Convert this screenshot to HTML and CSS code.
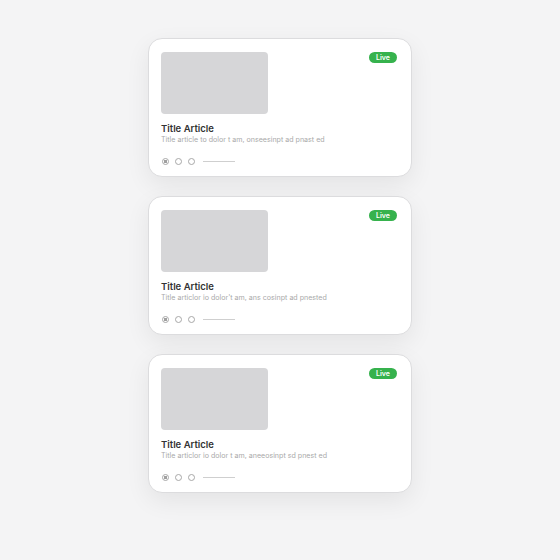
FILE: index.html
```html
<!DOCTYPE html>
<html>
<head>
<meta charset="utf-8">
<link rel="stylesheet" href="styles.css">
</head>
<body>
<div class="stack">
  <div class="card">
    <div class="top">
      <div class="thumb"></div>
      <span class="badge">Live</span>
    </div>
    <div class="title">Title Article</div>
    <div class="sub">Title article to dolor t am, onseesinpt ad pnast ed</div>
    <div class="pager">
      <span class="dot on"></span><span class="dot"></span><span class="dot"></span><span class="bar"></span>
    </div>
  </div>
  <div class="card">
    <div class="top">
      <div class="thumb"></div>
      <span class="badge">Live</span>
    </div>
    <div class="title">Title Article</div>
    <div class="sub">Title articlor io dolor't am, ans cosinpt ad pnested</div>
    <div class="pager">
      <span class="dot on"></span><span class="dot"></span><span class="dot"></span><span class="bar"></span>
    </div>
  </div>
  <div class="card">
    <div class="top">
      <div class="thumb"></div>
      <span class="badge">Live</span>
    </div>
    <div class="title">Title Article</div>
    <div class="sub">Title articlor io dolor t am, aneeosinpt sd pnest ed</div>
    <div class="pager">
      <span class="dot on"></span><span class="dot"></span><span class="dot"></span><span class="bar"></span>
    </div>
  </div>
</div>
</body>
</html>
```
FILE: styles.css
```css
html, body {
  margin: 0;
  padding: 0;
}
body {
  width: 560px;
  height: 560px;
  background: #f4f4f5;
  font-family: "Inter", "Liberation Sans", sans-serif;
}
.stack {
  display: flex;
  flex-direction: column;
  align-items: center;
  gap: 19px;
  padding-top: 38px;
}
.card {
  box-sizing: border-box;
  width: 264px;
  height: 139px;
  background: #fff;
  border: 1px solid #dcdcde;
  border-radius: 14px;
  box-shadow: 0 8px 24px rgba(0,0,0,0.07);
  padding: 13px 14px 0 12px;
}
.top {
  display: flex;
  justify-content: space-between;
  align-items: flex-start;
}
.thumb {
  width: 107px;
  height: 62px;
  background: #d6d6d8;
  border-radius: 4px;
}
.badge {
  background: #36b24d;
  color: #fff;
  font-size: 7px;
  font-weight: 600;
  height: 11px;
  line-height: 11px;
  width: 28px;
  text-align: center;
  border-radius: 6px;
}
.title {
  margin-top: 8px;
  font-size: 9.5px;
  font-weight: 600;
  color: #333;
  line-height: 13px;
}
.sub {
  margin-top: 0;
  font-size: 7.1px;
  color: #a9a9a9;
  line-height: 10px;
  white-space: nowrap;
}
.pager {
  display: flex;
  align-items: center;
  gap: 6px;
  margin-top: 13px;
  padding-left: 1px;
}
.dot {
  box-sizing: border-box;
  width: 7px;
  height: 7px;
  border: 1px solid #a8a8a8;
  border-radius: 50%;
}
.dot.on {
  background: radial-gradient(circle, #a0a0a0 0 1.6px, transparent 2px);
}
.bar {
  width: 32px;
  height: 1px;
  background: #cfcfcf;
  margin-left: 2px;
}
```
